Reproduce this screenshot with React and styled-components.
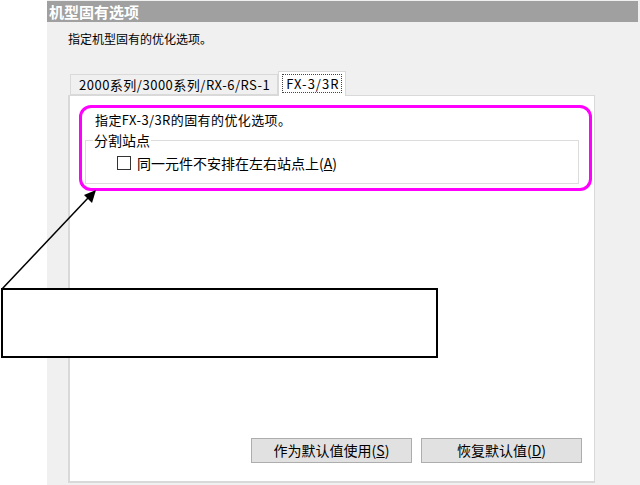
import React from "react";
import styled, { createGlobalStyle } from "styled-components";

const Global = createGlobalStyle`
  html, body { margin: 0; padding: 0; background: #ffffff; }
  body { font-family: "Noto Sans CJK SC", "Noto Sans", sans-serif; color: #000; }
`;

const Page = styled.div`
  position: relative;
  width: 640px;
  height: 485px;
  overflow: hidden;
  background: #ffffff;
`;

const Dialog = styled.div`
  margin-left: 47px;
  height: 485px;
  background: #f0f0f0;
  display: flex;
  flex-direction: column;
`;

const TitleBar = styled.div`
  margin-top: 1px;
  margin-right: 2px;
  height: 21px;
  background: #a0a0a0;
  color: #ffffff;
  font-weight: bold;
  font-size: 15px;
  line-height: 21px;
  padding-left: 2px;
`;

const Desc = styled.div`
  margin: 9px 0 0 21px;
  font-size: 12px;
  line-height: 16px;
`;

const TabRow = styled.div`
  margin: 24px 0 0 23px;
  height: 24px;
  display: flex;
  align-items: flex-end;
`;

const Tab = styled.div`
  box-sizing: border-box;
  height: ${(p) => (p.$active ? "25px" : "21px")};
  margin-bottom: ${(p) => (p.$active ? "-1px" : "0")};
  padding: ${(p) => (p.$active ? "2px 3px" : "0 7px 0 8px")};
  background: ${(p) => (p.$active ? "#ffffff" : "#f0f0f0")};
  border: 1px solid #d9d9d9;
  border-bottom: ${(p) => (p.$active ? "none" : "1px solid #d9d9d9")};
  font-size: 13px;
  letter-spacing: ${(p) => (p.$active ? "1px" : "0.5px")};
  line-height: 19px;
  position: relative;
  z-index: ${(p) => (p.$active ? 2 : 1)};
  display: flex;
  align-items: flex-start;
`;

const FocusRing = styled.span`
  border: 1px dotted #444;
  padding: 0 2px 0 3px;
  line-height: 17px;
`;

const Panel = styled.div`
  box-sizing: border-box;
  margin-left: 21px;
  width: 527px;
  height: 388px;
  background: #ffffff;
  border: 1px solid #d9d9d9;
  border-left-width: 2px;
  border-bottom-width: 2px;
  display: flex;
  flex-direction: column;
  position: relative;
  z-index: 1;
`;

const PanelText = styled.div`
  margin: 16px 0 0 25px;
  font-size: 13px;
  letter-spacing: 0.4px;
  line-height: 16px;
`;

const Group = styled.fieldset`
  margin: 5px 15px 0 15px;
  padding: 7px 0 11px 0;
  border: 1px solid #dcdcdc;
  min-width: 0;
`;

const Legend = styled.legend`
  font-size: 14px;
  line-height: 14px;
  padding: 0 1px;
  margin-left: 7px;
`;

const CheckRow = styled.label`
  display: flex;
  align-items: center;
  gap: 6px;
  margin-left: 31px;
  font-size: 14px;
  line-height: 18px;
`;

const Box = styled.span`
  box-sizing: border-box;
  width: 14px;
  height: 14px;
  border: 1px solid #333;
  background: #fff;
  flex: none;
`;

const ButtonRow = styled.div`
  margin-top: auto;
  display: flex;
  justify-content: flex-end;
  gap: 9px;
  padding: 0 12px 18px 0;
`;

const Button = styled.div`
  box-sizing: border-box;
  width: 161px;
  height: 25px;
  background: #e1e1e1;
  border: 1px solid #adadad;
  font-size: 14px;
  line-height: 23px;
  text-align: center;
`;

const Highlight = styled.div`
  position: absolute;
  left: 79px;
  top: 105px;
  width: 513px;
  height: 86px;
  box-sizing: border-box;
  border: 3px solid #ff00ff;
  border-radius: 12px;
  z-index: 5;
  pointer-events: none;
`;

const Callout = styled.div`
  position: absolute;
  left: 1px;
  top: 288px;
  width: 437px;
  height: 70px;
  box-sizing: border-box;
  border: 2px solid #000;
  background: #ffffff;
  z-index: 6;
`;

const ArrowSvg = styled.svg`
  position: absolute;
  left: 0;
  top: 0;
  z-index: 7;
  pointer-events: none;
`;

const U = styled.span`
  text-decoration: underline;
`;

export default function App() {
  return (
    <>
      <Global />
      <Page>
        <Dialog>
          <TitleBar>机型固有选项</TitleBar>
          <Desc>指定机型固有的优化选项。</Desc>
          <TabRow>
            <Tab>2000系列/3000系列/RX-6/RS-1</Tab>
            <Tab $active>
              <FocusRing>FX-3/3R</FocusRing>
            </Tab>
          </TabRow>
          <Panel>
            <PanelText>指定FX-3/3R的固有的优化选项。</PanelText>
            <Group>
              <Legend>分割站点</Legend>
              <CheckRow>
                <Box />
                <span>
                  同一元件不安排在左右站点上(<U>A</U>)
                </span>
              </CheckRow>
            </Group>
            <ButtonRow>
              <Button>
                作为默认值使用(<U>S</U>)
              </Button>
              <Button>
                恢复默认值(<U>D</U>)
              </Button>
            </ButtonRow>
          </Panel>
        </Dialog>
        <Highlight />
        <Callout />
        <ArrowSvg width="640" height="485" viewBox="0 0 640 485">
          <line x1="2" y1="289" x2="88" y2="198" stroke="#000" strokeWidth="1.5" />
          <polygon points="96,190 84,195 92,203" fill="#000" />
        </ArrowSvg>
      </Page>
    </>
  );
}
